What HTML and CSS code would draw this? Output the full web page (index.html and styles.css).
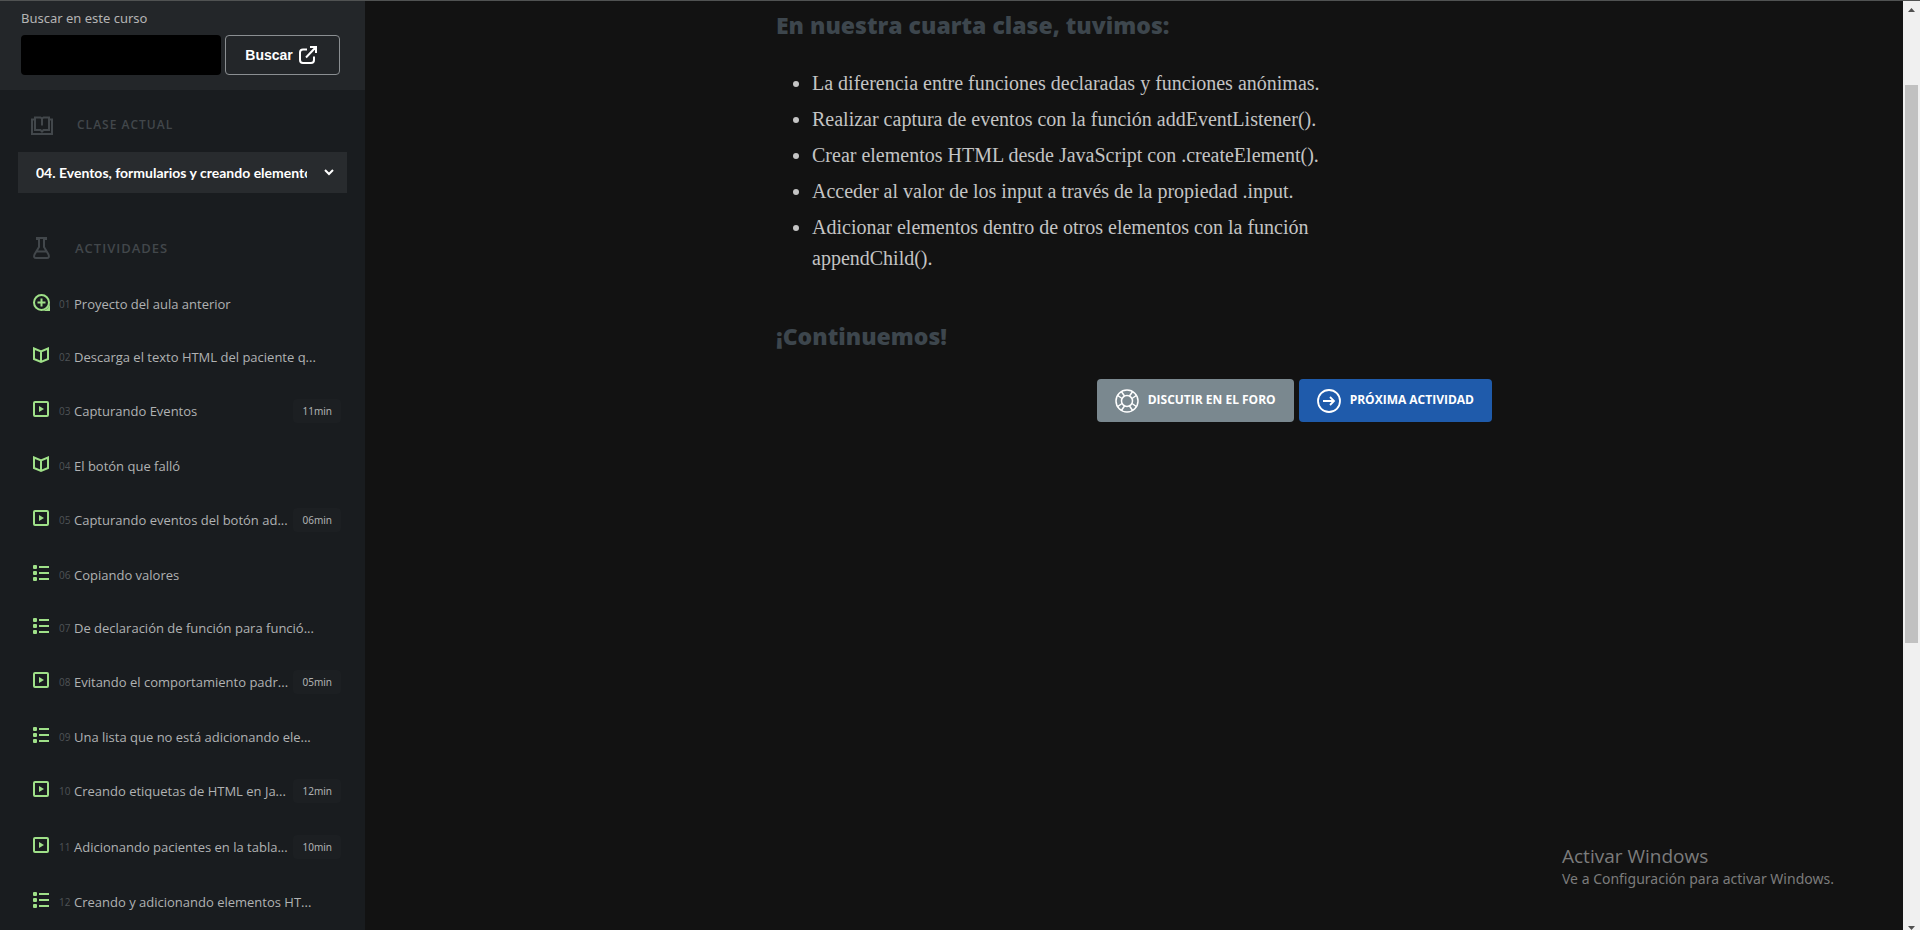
FILE: index.html
```html
<!DOCTYPE html>
<html lang="es">
<head>
<meta charset="utf-8">
<title>Eventos, formularios y creando elementos</title>
<link rel="stylesheet" href="styles.css">
</head>
<body>
<svg class="sprite" aria-hidden="true">
  <symbol id="i-plus" viewBox="0 0 18 18"><circle cx="8.500" cy="8.500" r="7.500" fill="none" stroke="currentColor" stroke-width="2"/><path d="M17 9v8H9a8.500 8.500 0 0 0 8-8z" fill="currentColor"/><path d="M8.500 4.500v8M4.500 8.500h8" stroke="currentColor" stroke-width="2"/></symbol>
  <symbol id="i-book" viewBox="0 0 18 18"><path d="M1 1.500l7 3 7-3v10.500l-7 3-7-3zM8 4.500v10.500" fill="none" stroke="currentColor" stroke-width="2"/></symbol>
  <symbol id="i-video" viewBox="0 0 18 18"><rect x="1" y="1" width="14" height="14" rx="1" fill="none" stroke="currentColor" stroke-width="2"/><path d="M6 5l5 3-5 3z" fill="currentColor"/></symbol>
  <symbol id="i-list" viewBox="0 0 18 18"><path d="M6 2h10M6 8h10M6 14h10" stroke="currentColor" stroke-width="2"/><rect width="4" height="4" rx="1" fill="currentColor"/><rect y="6" width="4" height="4" rx="1" fill="currentColor"/><rect y="12" width="4" height="4" rx="1" fill="currentColor"/></symbol>
</svg>
<div class="app">
  <aside class="sidebar">
    <form class="search">
      <label class="search-label" for="q">Buscar en este curso</label>
      <div class="search-row">
        <input class="search-input" id="q" type="text">
        <button class="search-button" type="button">Buscar
          <svg width="18" height="18" viewBox="0 0 18 18" fill="none" stroke="currentColor" stroke-width="2"><path d="M8 3.500H4A3 3 0 0 0 1 6.500V14a3 3 0 0 0 3 3h8a3 3 0 0 0 3-3v-3.500M11 1h6v6M17 1L7 11.500"/></svg>
        </button>
      </div>
    </form>
    <section class="current">
      <h2 class="side-title">
        <svg width="22" height="20" viewBox="0 0 22 20" fill="none" stroke="currentColor"><path d="M4 3.500H1V18h20V3.500h-3" stroke-width="2"/><path d="M4 1.500h5.500L11 2.500l1.500-1H18v12.500h-5.500l-1.500 1.500-1.500-1.500H4zM11 2.500v7" stroke-width="2"/></svg>
        <label for="lesson">CLASE ACTUAL</label>
      </h2>
      <div class="select-wrap">
        <select class="lesson" id="lesson"><option>04. Eventos, formularios y creando elementos</option></select>
        <svg class="chevron" width="10" height="7" viewBox="0 0 10 7" fill="none" stroke="currentColor" stroke-width="2"><path d="M1 1l4 4 4-4"/></svg>
      </div>
    </section>
    <nav class="activities">
      <h2 class="side-title">
        <svg width="18" height="24" viewBox="0 0 18 24" fill="none" stroke="currentColor" stroke-width="2"><path d="M4 4V2h9v2M6 3v8l-4.500 7.500C0.500 21 1.500 22 3 22h11c1.500 0 2.500-1 1.500-3.500L11 11V3M4 15.500h9"/></svg>
        ACTIVIDADES
      </h2>
      <ul class="items">
        <li><a class="item" href="#"><svg class="icon"><use href="#i-plus"/></svg><span class="num">01</span><span class="name">Proyecto del aula anterior</span></a></li>
        <li><a class="item" href="#"><svg class="icon"><use href="#i-book"/></svg><span class="num">02</span><span class="name">Descarga el texto HTML del paciente q...</span></a></li>
        <li><a class="item video" href="#"><svg class="icon"><use href="#i-video"/></svg><span class="num">03</span><span class="name">Capturando Eventos</span><span class="time">11min</span></a></li>
        <li><a class="item" href="#"><svg class="icon"><use href="#i-book"/></svg><span class="num">04</span><span class="name">El botón que falló</span></a></li>
        <li><a class="item video" href="#"><svg class="icon"><use href="#i-video"/></svg><span class="num">05</span><span class="name">Capturando eventos del botón ad...</span><span class="time">06min</span></a></li>
        <li><a class="item" href="#"><svg class="icon"><use href="#i-list"/></svg><span class="num">06</span><span class="name">Copiando valores</span></a></li>
        <li><a class="item" href="#"><svg class="icon"><use href="#i-list"/></svg><span class="num">07</span><span class="name">De declaración de función para funció...</span></a></li>
        <li><a class="item video" href="#"><svg class="icon"><use href="#i-video"/></svg><span class="num">08</span><span class="name">Evitando el comportamiento padr...</span><span class="time">05min</span></a></li>
        <li><a class="item" href="#"><svg class="icon"><use href="#i-list"/></svg><span class="num">09</span><span class="name">Una lista que no está adicionando ele...</span></a></li>
        <li><a class="item video" href="#"><svg class="icon"><use href="#i-video"/></svg><span class="num">10</span><span class="name">Creando etiquetas de HTML en Ja...</span><span class="time">12min</span></a></li>
        <li><a class="item video" href="#"><svg class="icon"><use href="#i-video"/></svg><span class="num">11</span><span class="name">Adicionando pacientes en la tabla...</span><span class="time">10min</span></a></li>
        <li><a class="item" href="#"><svg class="icon"><use href="#i-list"/></svg><span class="num">12</span><span class="name">Creando y adicionando elementos HT...</span></a></li>
      </ul>
    </nav>
  </aside>
  <main class="content">
    <article class="lesson-text">
      <h2 class="heading">En nuestra cuarta clase, tuvimos:</h2>
      <ul class="points">
        <li>La diferencia entre funciones declaradas y funciones anónimas.</li>
        <li>Realizar captura de eventos con la función addEventListener().</li>
        <li>Crear elementos HTML desde JavaScript con .createElement().</li>
        <li>Acceder al valor de los input a través de la propiedad .input.</li>
        <li>Adicionar elementos dentro de otros elementos con la función appendChild().</li>
      </ul>
      <h2 class="heading">¡Continuemos!</h2>
      <div class="actions">
        <button class="action forum" type="button">
          <svg width="24" height="24" viewBox="0 0 24 24" fill="none" stroke="currentColor" stroke-width="1.500"><circle cx="12" cy="12" r="11"/><circle cx="12" cy="12" r="5.500"/><path d="M9.500 7L6.500 2.700M7 9.500L2.700 6.500M14.500 7l3-4.300M17 9.500l4.300-3M9.500 17l-3 4.300M7 14.500l-4.300 3M14.500 17l3 4.300M17 14.500l4.300 3"/></svg>
          <span class="caption">DISCUTIR EN EL FORO</span>
        </button>
        <button class="action next" type="button">
          <svg width="24" height="24" viewBox="0 0 24 24" fill="none" stroke="currentColor" stroke-width="1.800"><circle cx="12" cy="12" r="11"/><path d="M6 12h11M13 8l4 4-4 4"/></svg>
          <span class="caption">PRÓXIMA ACTIVIDAD</span>
        </button>
      </div>
    </article>
  </main>
  <div class="scrollbar" aria-hidden="true">
    <svg width="7" height="4" viewBox="0 0 7 4"><path d="M0 4L3.500 0 7 4z" fill="#505050"/></svg>
    <div class="track"><div class="thumb"></div></div>
    <svg width="7" height="4" viewBox="0 0 7 4"><path d="M0 0h7L3.500 4z" fill="#505050"/></svg>
  </div>
</div>
<div class="watermark">
  <p class="wm-title">Activar Windows</p>
  <p class="wm-text">Ve a Configuración para activar Windows.</p>
</div>
</body>
</html>
```

FILE: styles.css
```css
* { box-sizing: border-box; }
body { margin: 0; background: #121212; color: #b4b4b4; font-family: "Open Sans", sans-serif; overflow: hidden; }
h2, ul, p { margin: 0; padding: 0; font-weight: inherit; }
svg { flex: none; }
.sprite { display: none; }
.app { display: flex; height: 100vh; border-top: 1px solid #505252; }
.sidebar { width: 365px; flex: none; background: #191c1f; overflow: hidden; }
.search { background: #232629; padding: 7px 25px 15px 21px; }
.search-label { display: block; font-family: "Noto Sans", sans-serif; font-size: 13px; line-height: 20px; margin-bottom: 7px; }
.search-row { display: flex; gap: 4px; }
.search-input { flex: 1; min-width: 0; height: 40px; border: 0; border-radius: 4px; background: #000; color: #fff; }
.search-button { display: flex; align-items: center; justify-content: center; gap: 6px; width: 115px; height: 40px; padding: 0 3px 0 0; border: 1px solid #8b8f92; border-radius: 4px; background: transparent; color: #fff; font: 700 14px "Liberation Sans", sans-serif; }
.side-title { display: flex; align-items: center; color: #42474b; font: 600 13px/24px "Open Sans", sans-serif; letter-spacing: 1px; }
.current { padding: 23px 18px 0; }
.current .side-title { gap: 24px; padding-left: 13px; font-size: 12px; }
.current .side-title svg { margin-top: 2px; }
.select-wrap { position: relative; margin-top: 15px; }
.lesson { appearance: none; width: 100%; height: 41px; border: 0; border-radius: 0; background: #282b2e; color: #fff; padding: 0 40px 0 18px; font: 700 14px Lato, sans-serif; text-overflow: clip; }
.chevron { position: absolute; right: 13px; top: 17px; color: #fff; }
.activities { padding: 43px 18px 0; }
.activities .side-title { gap: 24px; padding-left: 15px; }
.items { list-style: none; margin-top: 17px; }
.item { display: flex; align-items: center; height: 53px; padding: 0 6px 0 15px; color: #b0b2b3; text-decoration: none; font-size: 13px; }
.video { height: 56px; }
.icon { width: 18px; height: 18px; margin-bottom: 2px; color: #9fe088; }
.num { width: 15px; margin-left: 8px; color: #4f5356; font-size: 10px; }
.name { flex: 1; white-space: nowrap; }
.time { padding: 0 9px; border-radius: 4px; background: #1c1f22; font: 10px/24px "Noto Sans", sans-serif; }
.content { flex: 1; display: flex; justify-content: center; }
.lesson-text { width: 716px; padding-top: 8px; }
.heading { color: #3d464d; font-size: 23px; font-weight: 800; line-height: 32px; }
.points { width: 590px; margin: 27px 0 46px; padding-left: 36px; color: #c4c4c4; font: 20px/31px "Liberation Serif", serif; }
.points li { margin-bottom: 5px; }
.actions { display: flex; justify-content: flex-end; gap: 5px; margin-top: 27px; }
.action { display: flex; align-items: center; gap: 9px; height: 43px; padding: 0 18px; border: 0; border-radius: 4px; color: #fff; font: 700 12px "Open Sans", sans-serif; }
.caption { padding-bottom: 3px; }
.forum { background: #7a888f; }
.next { background: #1f5bab; }
.scrollbar { width: 17px; flex: none; display: flex; flex-direction: column; align-items: center; padding: 7px 0 0; background: #f0f0f0; }
.track { flex: 1; align-self: stretch; padding: 73px 2px 0; }
.thumb { height: 66.4%; background: #c1c1c1; }
.watermark { position: absolute; left: 1562px; bottom: 41px; color: #7c7c7c; }
.wm-title { font-size: 19px; line-height: 26px; }
.wm-text { font-family: "Noto Sans", sans-serif; font-size: 14px; line-height: 20px; }
```
